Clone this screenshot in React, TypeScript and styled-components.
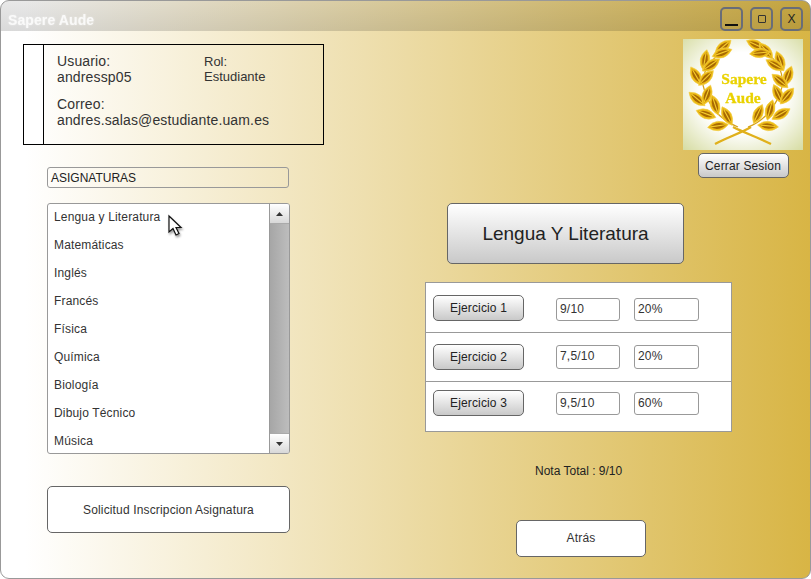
import React from "react";
import styled, { createGlobalStyle } from "styled-components";

const Global = createGlobalStyle`
  html, body { margin: 0; padding: 0; width: 811px; height: 579px; overflow: hidden; background: #fff; }
  * { box-sizing: border-box; }
  body { font-family: "Liberation Sans", Arial, sans-serif; color: #222; }
`;

const Window = styled.div`
  position: relative;
  width: 811px;
  height: 579px;
  border: 1px solid #999;
  border-radius: 9px;
  overflow: hidden;
  background: linear-gradient(90deg, #fff 3%, #d8b545 100%);
  display: flex;
  flex-direction: column;
`;

const TitleBar = styled.header`
  height: 30px;
  flex: none;
  display: flex;
  justify-content: space-between;
  padding: 0 7px;
  background: linear-gradient(180deg, rgba(0,0,0,.09), rgba(0,0,0,.15));
`;

const Title = styled.h1`
  margin: 0;
  padding-top: 11px;
  font-size: 14px;
  line-height: 16px;
  font-weight: 700;
  color: #fff;
  opacity: .85;
  letter-spacing: .1px;
  text-shadow: 0 0 2px rgba(255,255,255,.6);
`;

const WindowControls = styled.div`
  display: flex;
  gap: 7px;
  padding-top: 6px;
`;

const ControlButton = styled.button`
  width: 23px;
  height: 24px;
  padding: 0;
  border: 2px solid #696d78;
  border-radius: 5px;
  background: transparent;
  font: 12px "Liberation Sans", sans-serif;
  color: #222;
  display: flex;
  align-items: center;
  justify-content: center;
`;

const Dash = styled.span`
  width: 13px;
  height: 2px;
  margin-top: 11px;
  background: #111;
`;

const Square = styled.span`
  width: 8px;
  height: 8px;
  border: 1px solid #333;
  border-radius: 1px;
`;

const Body = styled.main`
  flex: 1;
  display: flex;
`;

const LeftColumn = styled.section`
  width: 301px;
  margin-left: 22px;
  flex: none;
  padding-top: 13px;
  display: flex;
  flex-direction: column;
`;

const UserCard = styled.div`
  width: 301px;
  height: 101px;
  border: 1px solid #000;
  display: flex;
`;

const CardStripe = styled.div`
  width: 20px;
  flex: none;
  background: #fff;
  border-right: 1px solid #000;
`;

const CardBody = styled.div`
  flex: 1;
  padding: 8px 0 0 13px;
  display: grid;
  grid-template-columns: 147px 1fr;
  grid-template-rows: 43px 1fr;
`;

const Field = styled.div<{ $wide?: boolean; $small?: boolean }>`
  grid-column: ${(p) => (p.$wide ? "1 / 3" : "auto")};
  margin-top: ${(p) => (p.$small ? "1px" : "0")};
  font-size: ${(p) => (p.$small ? "13px" : "14px")};
  line-height: ${(p) => (p.$small ? "15px" : "16px")};
  letter-spacing: ${(p) => (p.$small ? "0" : ".14px")};
  color: #333;
`;

const Inner = styled.div`
  width: 243px;
  margin-left: 24px;
  display: flex;
  flex-direction: column;
`;

const SectionLabel = styled.div`
  width: 242px;
  height: 21px;
  margin-top: 22px;
  padding-left: 3px;
  border: 1px solid #999;
  border-radius: 3px;
  font-size: 12px;
  line-height: 20px;
  color: #222;
`;

const SubjectBox = styled.div`
  position: relative;
  height: 251px;
  margin-top: 15px;
  border: 1px solid #999;
  border-radius: 3px;
  background: #fff;
  display: flex;
  overflow: hidden;
`;

const SubjectList = styled.ul`
  list-style: none;
  margin: 0;
  padding: 0 0 0 6px;
  flex: 1;
`;

const SubjectItem = styled.li`
  height: 28px;
  font-size: 12px;
  line-height: 26px;
  letter-spacing: .16px;
  color: #333;
`;

const Scrollbar = styled.div`
  width: 20px;
  flex: none;
  display: flex;
  flex-direction: column;
  border-left: 1px solid #999;
  background: linear-gradient(90deg, #a6a6a6, #bdbdbd);
`;

const ScrollButton = styled.div`
  height: 20px;
  display: flex;
  align-items: center;
  justify-content: center;
  background: linear-gradient(180deg, #fff, #d8d8d8);
  border-bottom: 1px solid #aaa;
  &:last-child { border-bottom: none; border-top: 1px solid #aaa; }
`;

const ScrollTrack = styled.div`
  flex: 1;
`;

const WhiteButton = styled.button<{ $w: number; $h: number; $mt: number }>`
  width: ${(p) => p.$w}px;
  height: ${(p) => p.$h}px;
  margin-top: ${(p) => p.$mt}px;
  padding: 0;
  flex: none;
  border: 1px solid #666;
  border-radius: 5px;
  background: #fff;
  font: 12px "Liberation Sans", sans-serif;
  letter-spacing: .15px;
  color: #333;
`;

const BackButton = styled(WhiteButton)`
  margin-left: 91px;
  padding-bottom: 2px;
`;

const RightColumn = styled.section`
  flex: 1;
  display: flex;
  flex-direction: column;
`;

const LogoRow = styled.div`
  display: flex;
  justify-content: flex-end;
  padding: 8px 7px 0 0;
`;

const LogoGroup = styled.div`
  width: 120px;
  display: flex;
  flex-direction: column;
  align-items: center;
`;

const Logo = styled.svg`
  width: 120px;
  height: 111px;
  display: block;
`;

const GrayButton = styled.button<{ $w: number; $h: number; $fs?: number }>`
  width: ${(p) => p.$w}px;
  height: ${(p) => p.$h}px;
  padding: 0;
  flex: none;
  border: 1px solid #666;
  border-radius: 5px;
  background: linear-gradient(180deg, #fff, #c9c9c9);
  font: ${(p) => p.$fs ?? 12}px "Liberation Sans", sans-serif;
  letter-spacing: ${(p) => ((p.$fs ?? 12) < 15 ? ".15px" : "0")};
  color: #222;
`;

const LogoutButton = styled(GrayButton)`
  margin-top: 3px;
`;

const Content = styled.div`
  width: 307px;
  margin: 25px 0 0 101px;
  display: flex;
  flex-direction: column;
  align-items: flex-start;
`;

const SubjectTitle = styled(GrayButton)`
  margin-left: 22px;
`;

const GradeTable = styled.div`
  width: 307px;
  height: 150px;
  margin-top: 18px;
  border: 1px solid #999;
  background: #fff;
  display: flex;
  flex-direction: column;
`;

const GradeRow = styled.div<{ $h: number }>`
  height: ${(p) => p.$h}px;
  flex: none;
  display: flex;
  align-items: flex-start;
  padding-left: 7px;
  border-bottom: 1px solid #999;
  &:last-child { border-bottom: none; }
`;

const RowButton = styled(GrayButton)<{ $top: number }>`
  margin-top: ${(p) => p.$top}px;
`;

const Cell = styled.div<{ $w: number; $ml: number; $top: number; $h: number }>`
  width: ${(p) => p.$w}px;
  height: ${(p) => p.$h}px;
  margin: ${(p) => p.$top}px 0 0 ${(p) => p.$ml}px;
  padding-left: 3px;
  border: 1px solid #999;
  border-radius: 3px;
  font-size: 12px;
  line-height: 21px;
  letter-spacing: .2px;
  color: #333;
  background: #fff;
`;

const Total = styled.p`
  margin: 32px 0 0 110px;
  height: 14px;
  font-size: 12px;
  line-height: 14px;
  color: #222;
`;

const Cursor = styled.svg`
  position: absolute;
  left: 166px;
  top: 213px;
  width: 18px;
  height: 24px;
  filter: drop-shadow(1px 2px 1px rgba(0,0,0,.4));
`;

const subjects = ["Lengua y Literatura", "Matemáticas", "Inglés", "Francés", "Física", "Química", "Biología", "Dibujo Técnico", "Música"];
const grades = [
  { name: "Ejercicio 1", grade: "9/10", weight: "20%", rowH: 50, btnTop: 12, cellTop: 15, cellH: 23 },
  { name: "Ejercicio 2", grade: "7,5/10", weight: "20%", rowH: 49, btnTop: 11, cellTop: 12, cellH: 24 },
  { name: "Ejercicio 3", grade: "9,5/10", weight: "60%", rowH: 49, btnTop: 8, cellTop: 10, cellH: 23 },
];

const Leaf = ({ x, y, r, l = 10.5 }: { x: number; y: number; r: number; l?: number }) => (
  <g transform={`translate(${x} ${y}) rotate(${r})`}>
    <path d={`M${-l} 0 Q0 -9.5 ${l} 0 Q0 9.5 ${-l} 0 Z`} fill="#ecbb14" stroke="#f3cf4e" strokeWidth="0.6" />
    <path d={`M${-l + 2.5} 0 Q0 -5.6 ${l - 2.5} 0 Q0 5.6 ${-l + 2.5} 0 Z`} fill="#a96a06" />
    <path d={`M${-l + 3} -0.2 L${l - 3} -0.2`} stroke="#f6cd2c" strokeWidth="1.1" />
  </g>
);

const leaves: [number, number, number][] = [
  [40, 8, -40], [39, 14, -20], [22, 21, -80], [28, 26, -35], [13, 37, 60], [23, 39, -45],
  [14, 60, 40], [24, 56, -70], [23, 75, 20], [32, 66, 72], [44, 77, 62], [35, 87, -8],
  [73, 6, 25], [83, 12, 50], [77, 14, -5], [97, 22, 70], [92, 26, 30], [105, 37, -70],
  [97, 42, 40], [95, 55, 65], [104, 57, -50], [87, 71, -75], [98, 75, -30], [75, 75, -65], [85, 87, 5],
];

const LogoArt = () => (
  <Logo viewBox="0 0 120 111" role="img" aria-label="Sapere Aude">
    <defs>
      <radialGradient id="halo" cx="50%" cy="48%" r="72%">
        <stop offset="50%" stopColor="#ffffff" />
        <stop offset="100%" stopColor="#d6dca2" />
      </radialGradient>
      <filter id="soft" x="-5%" y="-5%" width="110%" height="110%">
        <feGaussianBlur stdDeviation="0.35" />
      </filter>
    </defs>
    <rect width="120" height="111" fill="url(#halo)" />
    <g filter="url(#soft)">
      <path d="M32 105 C45 98 58 94 68 88 M88 105 C76 99 62 94 50 88" fill="none" stroke="#e0b01a" strokeWidth="2.4" />
      <path d="M55 88 C35 80 24 64 20 46 C20 32 25 24 33 18" fill="none" stroke="#d6a216" strokeWidth="1.2" />
      <path d="M65 88 C82 82 94 66 99 48 C101 32 94 22 82 12" fill="none" stroke="#d6a216" strokeWidth="1.2" />
      {leaves.map(([x, y, r], i) => <Leaf key={i} x={x} y={y} r={r} />)}
      <text x="61" y="45" textAnchor="middle" fontFamily="'Liberation Serif', serif" fontWeight="700" fontSize="15.5" fill="#ead200" stroke="#ead200" strokeWidth="0.3">Sapere</text>
      <text x="60" y="64" textAnchor="middle" fontFamily="'Liberation Serif', serif" fontWeight="700" fontSize="15.5" fill="#ead200" stroke="#ead200" strokeWidth="0.3">Aude</text>
    </g>
  </Logo>
);

export default function App() {
  return (
    <>
      <Global />
      <Window>
        <TitleBar>
          <Title>Sapere Aude</Title>
          <WindowControls>
            <ControlButton aria-label="Minimizar"><Dash /></ControlButton>
            <ControlButton aria-label="Maximizar"><Square /></ControlButton>
            <ControlButton>X</ControlButton>
          </WindowControls>
        </TitleBar>
        <Body>
          <LeftColumn>
            <UserCard>
              <CardStripe />
              <CardBody>
                <Field>Usuario:<br />andressp05</Field>
                <Field $small>Rol:<br />Estudiante</Field>
                <Field $wide>Correo:<br />andres.salas@estudiante.uam.es</Field>
              </CardBody>
            </UserCard>
            <Inner>
              <SectionLabel>ASIGNATURAS</SectionLabel>
              <SubjectBox>
                <SubjectList>
                  {subjects.map((s) => <SubjectItem key={s}>{s}</SubjectItem>)}
                </SubjectList>
                <Scrollbar>
                  <ScrollButton>
                    <svg width="7" height="4" viewBox="0 0 7 4"><path d="M3.5 0 L7 4 H0 Z" fill="#333" /></svg>
                  </ScrollButton>
                  <ScrollTrack />
                  <ScrollButton>
                    <svg width="7" height="4" viewBox="0 0 7 4"><path d="M0 0 H7 L3.5 4 Z" fill="#333" /></svg>
                  </ScrollButton>
                </Scrollbar>
              </SubjectBox>
              <WhiteButton $w={243} $h={47} $mt={32}>Solicitud Inscripcion Asignatura</WhiteButton>
            </Inner>
          </LeftColumn>
          <RightColumn>
            <LogoRow>
              <LogoGroup>
                <LogoArt />
                <LogoutButton $w={91} $h={25}>Cerrar Sesion</LogoutButton>
              </LogoGroup>
            </LogoRow>
            <Content>
              <SubjectTitle $w={237} $h={61} $fs={19}>Lengua Y Literatura</SubjectTitle>
              <GradeTable>
                {grades.map((g) => (
                  <GradeRow key={g.name} $h={g.rowH}>
                    <RowButton $w={91} $h={26} $top={g.btnTop}>{g.name}</RowButton>
                    <Cell $w={64} $ml={32} $top={g.cellTop} $h={g.cellH}>{g.grade}</Cell>
                    <Cell $w={65} $ml={14} $top={g.cellTop} $h={g.cellH}>{g.weight}</Cell>
                  </GradeRow>
                ))}
              </GradeTable>
              <Total>Nota Total : 9/10</Total>
              <BackButton $w={130} $h={37} $mt={42}>Atrás</BackButton>
            </Content>
          </RightColumn>
        </Body>
        <Cursor viewBox="0 0 18 24">
          <path d="M2 2 L2 18 L6 14.5 L9 21 L12 19.5 L9 13.5 L14 13.5 Z" fill="#fff" stroke="#111" strokeWidth="1.2" />
        </Cursor>
      </Window>
    </>
  );
}
